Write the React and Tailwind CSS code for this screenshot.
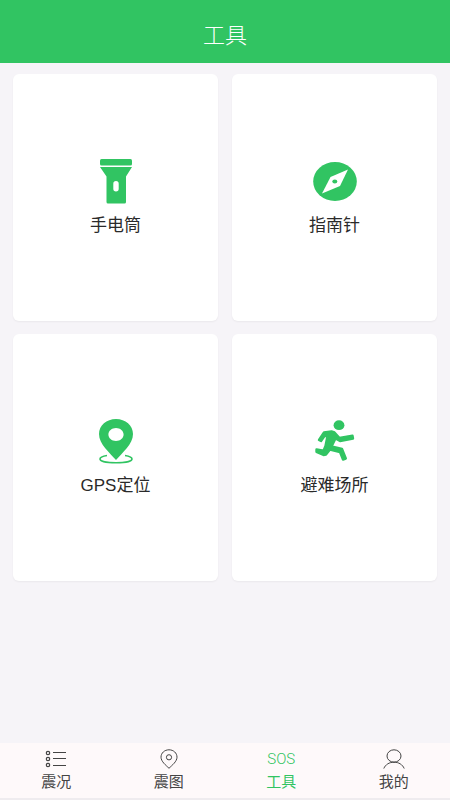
import React, { useState } from 'react';

const FlashlightIcon = () => (
    <svg width="34" height="46" viewBox="0 0 34 46" fill="currentColor" aria-hidden="true">
        <rect x="1" y="1" width="32" height="6.500" rx="1.500" />
        <path
            fillRule="evenodd"
            d="M1 9h32l-6 9.500V44a1.500 1.500 0 0 1-1.500 1.500H9A1.500 1.500 0 0 1 7.500 44V18.500ZM17 23a2.700 2.700 0 0 0-2.700 2.700v5a2.700 2.700 0 0 0 5.400 0v-5A2.700 2.700 0 0 0 17 23Z"
        />
    </svg>
);

const CompassIcon = () => (
    <svg width="44" height="46" viewBox="0 0 44 46" aria-hidden="true">
        <ellipse cx="22" cy="23.500" rx="21.800" ry="19.500" fill="currentColor" />
        <path d="M35 11.500 27 28 9 35.500 17.500 19Z" fill="#fff" />
        <ellipse cx="21.800" cy="23.500" rx="2.500" ry="2.100" fill="currentColor" />
    </svg>
);

const LocationIcon = () => (
    <svg width="36" height="46" viewBox="0 0 36 46" aria-hidden="true">
        <path
            d="M9 37.500C4.500 38.200 2 39.500 2 41c0 2.300 7 3.800 16 3.800S34 43.300 34 41c0-1.500-2.500-2.800-7-3.500"
            fill="none"
            stroke="currentColor"
            strokeWidth="1.600"
        />
        <path
            fill="currentColor"
            fillRule="evenodd"
            d="M18 1C8.500 1 1 7.600 1 16c0 10 10.500 18.500 17 26 6.500-7.500 17-16 17-26C35 7.600 27.500 1 18 1Zm0 9c4.200 0 7.600 2.900 7.600 6.500S22.200 23 18 23s-7.600-2.900-7.600-6.500S13.800 10 18 10Z"
        />
    </svg>
);

const RunningIcon = () => (
    <svg width="42" height="46" viewBox="0 0 42 46" aria-hidden="true">
        <ellipse cx="25" cy="7.200" rx="5.400" ry="4.900" fill="currentColor" />
        <path
            d="M10 14.500 17.500 13.500 20.500 14.500 25.500 20 38.500 17.800 39 20.500 26 23 21.500 20.500 17.500 28.500 28 31 31.800 40.500 29 41.500 26 34 16 31.500 12 36.500 9.500 37 2.500 33.800 2.500 31.500 9.500 32.800 11.500 28 13.500 18 10.500 18 7 23 5 22Z"
            fill="currentColor"
            stroke="currentColor"
            strokeWidth="2.400"
            strokeLinejoin="round"
        />
    </svg>
);

const ListIcon = () => (
    <svg width="22" height="20" viewBox="0 0 22 20" fill="none" stroke="currentColor" aria-hidden="true">
        <circle cx="3" cy="4" r="1.700" strokeWidth="1.200" />
        <circle cx="3" cy="10" r="1.700" strokeWidth="1.200" />
        <circle cx="3" cy="16" r="1.700" strokeWidth="1.200" />
        <path d="M8 3.500h13M8 9.500h13M8 16.500h13" />
    </svg>
);

const PinIcon = () => (
    <svg width="20" height="20" viewBox="0 0 20 20" fill="none" stroke="currentColor" aria-hidden="true">
        <path d="M10 .800c-4.500 0-8 3.200-8 7.400C2 12.500 7 16.300 10 19.300c3-3 8-6.800 8-11.100C18 4 14.500.800 10 .800Z" />
        <circle cx="10" cy="8.300" r="2.600" />
    </svg>
);

const UserIcon = () => (
    <svg width="22" height="20" viewBox="0 0 22 20" fill="none" stroke="currentColor" aria-hidden="true">
        <ellipse cx="11" cy="7" rx="7" ry="6.200" />
        <path d="M.800 19.500C2.500 15.500 6.300 13.200 11 13.200s8.500 2.300 10.200 6.300" />
    </svg>
);

const SosIcon = () => <span className="font-['Roboto',sans-serif] text-[15px] leading-5 font-light">SOS</span>;

const tools = [
    { label: '手电筒', Icon: FlashlightIcon },
    { label: '指南针', Icon: CompassIcon },
    { label: 'GPS定位', Icon: LocationIcon },
    { label: '避难场所', Icon: RunningIcon }
];

const tabs = [
    { label: '震况', Icon: ListIcon },
    { label: '震图', Icon: PinIcon },
    { label: '工具', Icon: SosIcon },
    { label: '我的', Icon: UserIcon }
];

const App = () => {
    const [activeTab, setActiveTab] = useState('工具');

    return (
        <div className="flex min-h-screen flex-col bg-[#f6f4f8] font-['Liberation_Sans','Noto_Sans_CJK_SC',sans-serif] text-[#2a2a2a]">
            <header className="bg-[#31c462] pt-5 pb-3 text-center text-white">
                <h1 className="text-[22px] leading-[31px] font-light">工具</h1>
            </header>

            <main className="grid flex-1 grid-cols-2 content-start gap-x-[14px] gap-y-[13px] px-[13px] py-[11px]">
                {tools.map(({ label, Icon }) => (
                    <button
                        key={label}
                        type="button"
                        className="flex h-[247px] flex-col items-center justify-center gap-[10px] rounded-md bg-white shadow-xs"
                    >
                        <span className="text-[#31c462]">
                            <Icon />
                        </span>
                        <span className="text-[17px] leading-6">{label}</span>
                    </button>
                ))}
            </main>

            <nav className="grid grid-cols-4 border-b-2 border-[#efecef] bg-[#fef9fa] pt-[6px] pb-[6px]">
                {tabs.map(({ label, Icon }) => (
                    <button
                        key={label}
                        type="button"
                        onClick={() => setActiveTab(label)}
                        className={`flex flex-col items-center gap-[3px] ${activeTab === label ? 'text-[#31c462]' : 'text-[#444444]'}`}
                    >
                        <span className="flex h-5 items-center">
                            <Icon />
                        </span>
                        <span className="text-[15px] leading-5">{label}</span>
                    </button>
                ))}
            </nav>
        </div>
    );
};

export default App;
